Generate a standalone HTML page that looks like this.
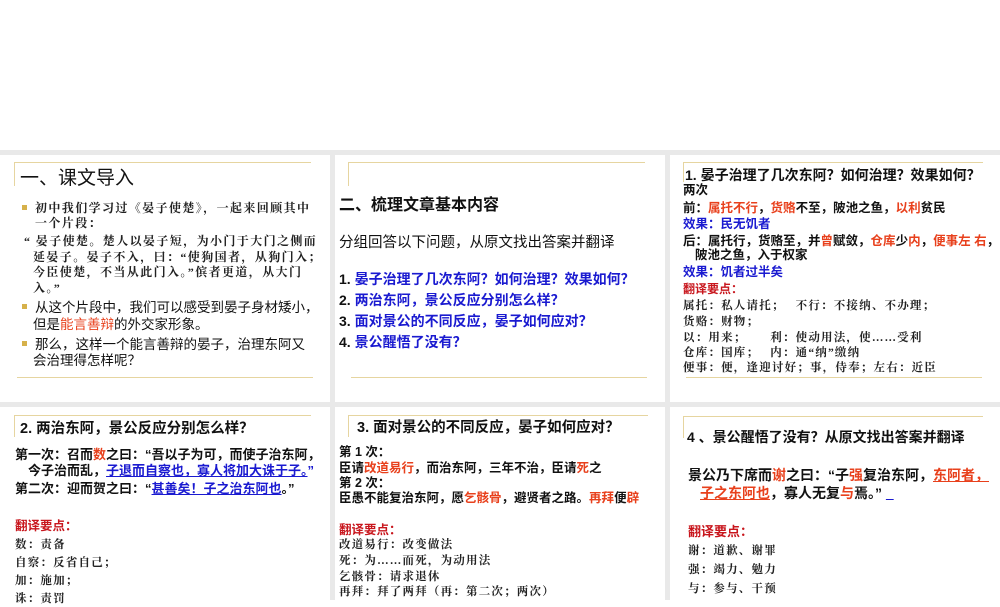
<!DOCTYPE html>
<html><head><meta charset="utf-8"><style>
*{margin:0;padding:0;box-sizing:border-box}
body{width:1000px;height:600px;overflow:hidden;background:#fff;position:relative;font-family:"Liberation Sans","Noto Sans CJK SC",sans-serif;color:#111}
.g{position:absolute;background:#e9e9e9}
.s{position:absolute;background:#fff;overflow:hidden}
.l{position:absolute;background:#e6d5a0}
.t{position:absolute;white-space:nowrap;line-height:16px}
.k{font-family:"Liberation Serif","Noto Serif CJK SC",serif;font-size:11.5px;letter-spacing:1.2px;font-weight:bold;color:#222}
.b{font-weight:bold}
.r{color:#e8401c}
.rd{color:#c8161d;font-weight:bold}
.bl{color:#1a1ad0}
.u{text-decoration:underline}
.sq{display:inline-block;width:5px;height:5px;background:#d6b14a;margin-right:8px;vertical-align:middle;position:relative;top:-2px}
</style></head><body>
<div class="g" style="left:0;top:150px;width:1000px;height:450px"></div>
<div class="s" style="left:0;top:155px;width:330px;height:247px"></div>
<div class="s" style="left:335px;top:155px;width:330px;height:247px"></div>
<div class="s" style="left:670px;top:155px;width:330px;height:247px"></div>
<div class="s" style="left:0;top:407px;width:330px;height:193px"></div>
<div class="s" style="left:335px;top:407px;width:330px;height:193px"></div>
<div class="s" style="left:670px;top:407px;width:330px;height:193px"></div>

<div class="l" style="left:14px;top:162px;width:297px;height:1px"></div>
<div class="l" style="left:14px;top:162px;width:1px;height:24px"></div>
<div class="l" style="left:17px;top:377px;width:296px;height:1px"></div>
<div class="l" style="left:348px;top:162px;width:297px;height:1px"></div>
<div class="l" style="left:348px;top:162px;width:1px;height:24px"></div>
<div class="l" style="left:351px;top:377px;width:296px;height:1px"></div>
<div class="l" style="left:683px;top:162px;width:300px;height:1px"></div>
<div class="l" style="left:683px;top:162px;width:1px;height:20px"></div>
<div class="l" style="left:686px;top:377px;width:296px;height:1px"></div>
<div class="l" style="left:14px;top:415px;width:297px;height:1px"></div>
<div class="l" style="left:14px;top:415px;width:1px;height:22px"></div>
<div class="l" style="left:348px;top:415px;width:300px;height:1px"></div>
<div class="l" style="left:348px;top:415px;width:1px;height:22px"></div>
<div class="l" style="left:683px;top:416px;width:300px;height:1px"></div>
<div class="l" style="left:683px;top:416px;width:1px;height:22px"></div>

<!-- slide 1 -->
<div class="t" style="left:20px;top:168px;font-size:19px;line-height:22px">一、课文导入</div>
<div class="t k" style="left:22px;top:200px;font-size:12px;letter-spacing:1.4px"><span class="sq"></span>初中我们学习过《晏子使楚》，一起来回顾其中</div>
<div class="t k" style="left:35px;top:215px;font-size:12px;letter-spacing:1.4px">一个片段：</div>
<div class="t k" style="left:24px;top:233px;font-size:12px;letter-spacing:1.4px">“ 晏子使楚。楚人以晏子短，为小门于大门之侧而</div>
<div class="t k" style="left:33px;top:249px;font-size:12px;letter-spacing:1.4px">延晏子。晏子不入，曰：“使狗国者，从狗门入；</div>
<div class="t k" style="left:33px;top:264px;font-size:12px;letter-spacing:1.4px">今臣使楚，不当从此门入。”傧者更道，从大门</div>
<div class="t k" style="left:33px;top:280px;font-size:12px;letter-spacing:1.4px">入。”</div>
<div class="t" style="left:22px;top:300px;font-size:13.5px"><span class="sq"></span>从这个片段中，我们可以感受到晏子身材矮小，</div>
<div class="t" style="left:33px;top:317px;font-size:13.5px">但是<span class="r">能言善辩</span>的外交家形象。</div>
<div class="t" style="left:22px;top:337px;font-size:13.5px"><span class="sq"></span>那么，这样一个能言善辩的晏子，治理东阿又</div>
<div class="t" style="left:33px;top:353px;font-size:13.5px">会治理得怎样呢？</div>

<!-- slide 2 -->
<div class="t b" style="left:339px;top:196px;font-size:16px;line-height:20px">二、梳理文章基本内容</div>
<div class="t" style="left:339px;top:235px;font-size:14.5px">分组回答以下问题，从原文找出答案并翻译</div>
<div class="t b" style="left:339px;top:271px;font-size:14px">1. <span class="bl">晏子治理了几次东阿？如何治理？效果如何？</span></div>
<div class="t b" style="left:339px;top:292px;font-size:14px">2. <span class="bl">两治东阿，景公反应分别怎么样？</span></div>
<div class="t b" style="left:339px;top:313px;font-size:14px">3. <span class="bl">面对景公的不同反应，晏子如何应对？</span></div>
<div class="t b" style="left:339px;top:334px;font-size:14px">4. <span class="bl">景公醒悟了没有？</span></div>

<!-- slide 3 -->
<div class="t b" style="left:685px;top:166px;font-size:14px;line-height:18px">1. 晏子治理了几次东阿？如何治理？效果如何？</div>
<div class="t b" style="left:683px;top:182px;font-size:12.5px">两次</div>
<div class="t b" style="left:683px;top:200px;font-size:12.5px">前：<span class="r">属托不行</span>，<span class="r">货赂</span>不至，陂池之鱼，<span class="r">以利</span>贫民</div>
<div class="t b bl" style="left:683px;top:216px;font-size:12.5px">效果：民无饥者</div>
<div class="t b" style="left:683px;top:233px;font-size:12.5px">后：属托行，货赂至，并<span class="r">曾</span>赋敛，<span class="r">仓库</span>少<span class="r">内</span>，<span class="r">便事左 右</span>，</div>
<div class="t b" style="left:695px;top:247px;font-size:12.5px">陂池之鱼，入于权家</div>
<div class="t b bl" style="left:683px;top:264px;font-size:12.5px">效果：饥者过半矣</div>
<div class="t rd" style="left:683px;top:281px;font-size:12px">翻译要点：</div>
<div class="t k" style="left:683px;top:298px">属托：私人请托；　 不行：不接纳、不办理；</div>
<div class="t k" style="left:683px;top:314px">货赂：财物；</div>
<div class="t k" style="left:683px;top:330px">以：用来；　　 利：使动用法，使……受利</div>
<div class="t k" style="left:683px;top:345px">仓库：国库；　 内：通“纳”缴纳</div>
<div class="t k" style="left:683px;top:360px">便事：便，逢迎讨好；事，侍奉；左右：近臣</div>

<!-- slide 4 -->
<div class="t b" style="left:20px;top:421px;font-size:14.5px">2. 两治东阿，景公反应分别怎么样？</div>
<div class="t b" style="left:15px;top:447px;font-size:13px">第一次：召而<span class="r">数</span>之曰：“吾以子为可，而使子治东阿，</div>
<div class="t b" style="left:28px;top:463px;font-size:13px">今子治而乱，<span class="bl u">子退而自察也，寡人将加大诛于子。</span><span class="bl">”</span></div>
<div class="t b" style="left:15px;top:481px;font-size:13px">第二次：迎而贺之曰：“<span class="bl u">甚善矣！子之治东阿也</span>。”</div>
<div class="t rd" style="left:15px;top:518px;font-size:12.5px">翻译要点：</div>
<div class="t k" style="left:15px;top:537px">数：责备</div>
<div class="t k" style="left:15px;top:555px">自察：反省自己；</div>
<div class="t k" style="left:15px;top:573px">加：施加；</div>
<div class="t k" style="left:15px;top:591px">诛：责罚</div>

<!-- slide 5 -->
<div class="t b" style="left:357px;top:420px;font-size:14.5px">3. 面对景公的不同反应，晏子如何应对？</div>
<div class="t b" style="left:339px;top:444px;font-size:12.5px">第 1 次：</div>
<div class="t b" style="left:339px;top:460px;font-size:12.5px">臣请<span class="r">改道易行</span>，而治东阿，三年不治，臣请<span class="r">死</span>之</div>
<div class="t b" style="left:339px;top:475px;font-size:12.5px">第 2 次：</div>
<div class="t b" style="left:339px;top:490px;font-size:12.5px">臣愚不能复治东阿，愿<span class="r">乞骸骨</span>，避贤者之路。<span class="r">再拜</span>便<span class="r">辟</span></div>
<div class="t rd" style="left:339px;top:522px;font-size:12.5px">翻译要点：</div>
<div class="t k" style="left:339px;top:537px">改道易行：改变做法</div>
<div class="t k" style="left:339px;top:553px">死：为……而死，为动用法</div>
<div class="t k" style="left:339px;top:569px">乞骸骨：请求退休</div>
<div class="t k" style="left:339px;top:584px">再拜：拜了两拜（再：第二次；两次）</div>

<!-- slide 6 -->
<div class="t b" style="left:687px;top:429px;font-size:14px">4 、景公醒悟了没有？从原文找出答案并翻译</div>
<div class="t b" style="left:688px;top:467px;font-size:14px">景公乃下席而<span class="r">谢</span>之曰：“子<span class="r">强</span>复治东阿，<span class="r u">东阿者，</span></div>
<div class="t b" style="left:700px;top:485px;font-size:14px"><span class="r u">子之东阿也</span>，寡人无复<span class="r">与</span>焉。” <span class="bl u">&nbsp;&nbsp;</span></div>
<div class="t rd" style="left:688px;top:524px;font-size:13px">翻译要点：</div>
<div class="t k" style="left:688px;top:543px">谢：道歉、谢罪</div>
<div class="t k" style="left:688px;top:562px">强：竭力、勉力</div>
<div class="t k" style="left:688px;top:581px">与：参与、干预</div>
</body></html>
